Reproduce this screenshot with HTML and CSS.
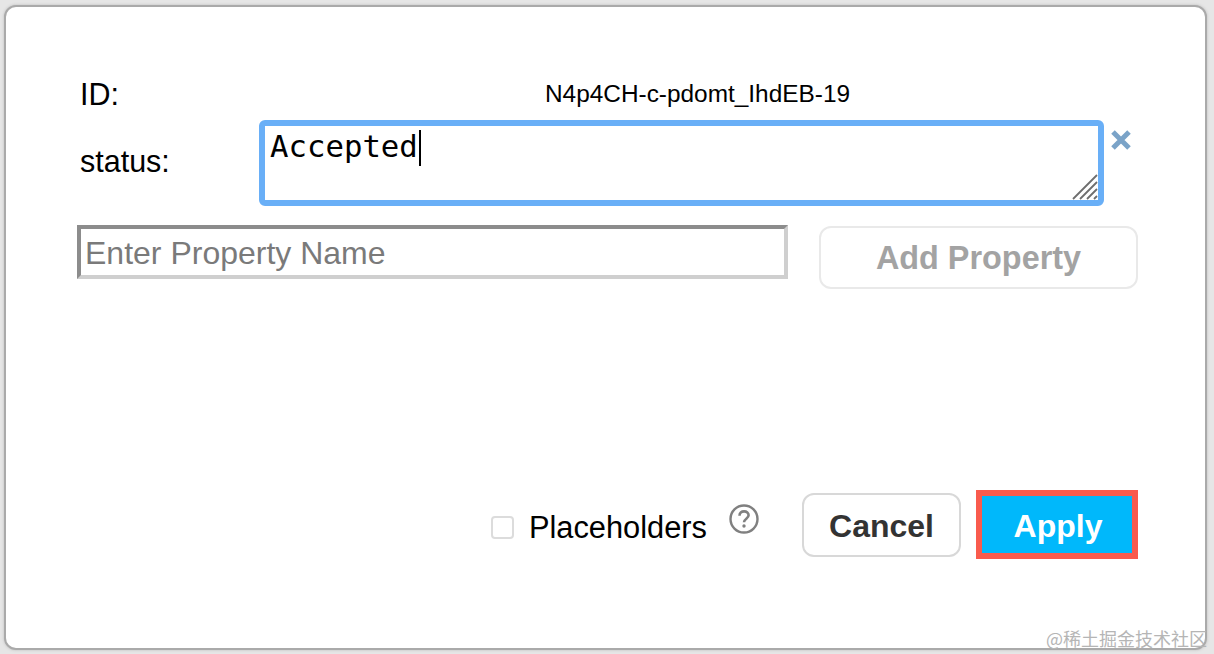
FILE: index.html
```html
<!DOCTYPE html>
<html lang="en">
<head>
  <meta charset="utf-8">
  <title>Edit Data</title>
  <link rel="stylesheet" href="styles.css">
</head>
<body>
  <div class="dialog">
    <!-- Properties -->
    <div class="prop-row id-row">
      <label class="prop-label">ID:</label>
      <span class="id-value">N4p4CH-c-pdomt_IhdEB-19</span>
    </div>
    <div class="prop-row status-row">
      <label class="prop-label status-label">status:</label>
      <div class="value-box">
        <span class="value-text">Accepted</span><span class="caret"></span>
        <svg class="grip" width="26" height="26" viewBox="0 0 26 26">
          <path d="M1 25 25 1M8 25 25 8M15 25 25 15M22 25 25 22" stroke="#6e6e6e" stroke-width="1.8" fill="none"/>
        </svg>
      </div>
      <svg class="remove" width="22" height="22" viewBox="0 0 22 22">
        <path d="M3 3 19 19M19 3 3 19" stroke="#7aa3c8" stroke-width="5" fill="none"/>
      </svg>
    </div>

    <!-- Add property -->
    <div class="add-row">
      <input class="name-input" type="text" placeholder="Enter Property Name">
      <button class="btn add-btn" disabled>Add Property</button>
    </div>

    <!-- Footer -->
    <div class="footer">
      <input class="check" type="checkbox">
      <span class="check-label">Placeholders</span>
      <svg class="help" width="32" height="32" viewBox="0 0 32 32">
        <circle cx="16" cy="16" r="13.5" stroke="#808080" stroke-width="2.4" fill="none"/>
        <path d="M11.5 12.8c0-2.8 2-4.4 4.6-4.4s4.500 1.600 4.500 3.900c0 3.300-4.600 3.500-4.600 7" stroke="#808080" stroke-width="2.600" fill="none"/>
        <circle cx="16" cy="23" r="1.700" fill="#808080"/>
      </svg>
      <button class="btn cancel-btn">Cancel</button>
      <button class="btn apply-btn">Apply</button>
    </div>

    <span class="watermark">@稀土掘金技术社区</span>
  </div>
</body>
</html>
```

FILE: styles.css
```css
html, body { margin: 0; height: 100%; }
body { background-color: #e6e6e6; padding: 5px 7px 0 4px; box-sizing: border-box; height: 654px; overflow: hidden; font-family: "Liberation Sans", Arial, sans-serif; }

.dialog { position: relative; box-sizing: border-box; height: 645px; background: #fff; border: 2px solid #aaa; border-radius: 12px; box-shadow: 0 0 3px #bbb; padding: 0 67px 0 73px; display: flex; flex-direction: column; }

.prop-row { display: flex; }
.id-row { margin-top: 69px; height: 36px; align-items: center; }
.prop-label { box-sizing: border-box; width: 180px; padding-left: 1px; font-size: 30.500px; color: #000; flex-shrink: 0; }
.id-value { width: 877px; text-align: center; font-size: 24.400px; color: #000; }

.status-row { margin-top: 8px; }
.status-label { margin-top: 24px; line-height: 34px; }
.value-box { position: relative; box-sizing: border-box; width: 845px; height: 86px; flex-shrink: 0; border: 6px solid #69aff7; border-radius: 6px; padding: 0 5px; }
.value-text { font-family: "DejaVu Sans Mono", monospace; font-size: 30.700px; line-height: 42px; color: #000; }
.caret { display: inline-block; width: 2px; height: 36px; background: #000; margin-left: 1px; vertical-align: -9px; }
.grip { position: absolute; right: 0; bottom: 0; }
.remove { margin: 9px 0 0 6px; }

.add-row { display: flex; align-items: flex-start; margin-top: 19px; margin-left: -2px; }
.name-input { box-sizing: border-box; width: 711px; height: 54px; flex-shrink: 0; border-style: solid; border-width: 4px; border-color: #8c8c8c #cfcfcf #cfcfcf #8c8c8c; padding: 3px 4px 0; font-family: inherit; font-size: 32px; outline: none; }
.name-input::placeholder { color: #7a7a7a; }

.btn { box-sizing: border-box; font-family: inherit; font-size: 32px; font-weight: bold; background: #fff; border-radius: 12px; padding: 3px 0 0; }
.add-btn { width: 319px; height: 63px; margin-left: 31px; margin-top: 1px; border: 2px solid #e9e9e9; color: #a3a3a3; font-size: 32.400px; padding-top: 2px; flex-shrink: 0; }

.footer { display: flex; align-items: center; margin-top: auto; margin-bottom: 89px; height: 69px; justify-content: flex-end; }
.check { appearance: none; box-sizing: border-box; width: 23px; height: 23px; margin: 5px 15px 0 0; border: 2px solid #dcdcdc; border-radius: 4px; background: #fff; }
.check-label { font-size: 30.800px; color: #000; margin-top: 6px; }
.help { margin: -12px 0 0 21px; }
.cancel-btn { width: 159px; height: 64px; margin: 0 15px 0 42px; border: 2px solid #d8d8d8; color: #333; }
.apply-btn { width: 162px; height: 69px; border: 6px solid #f95b4d; border-radius: 0; background: #00b8fb; color: #fff; padding-left: 2px; }

.watermark { position: absolute; right: -2px; bottom: -2px; font-family: "Noto Sans CJK SC", sans-serif; font-size: 18px; line-height: 24px; color: #b5b5b5; }
```
